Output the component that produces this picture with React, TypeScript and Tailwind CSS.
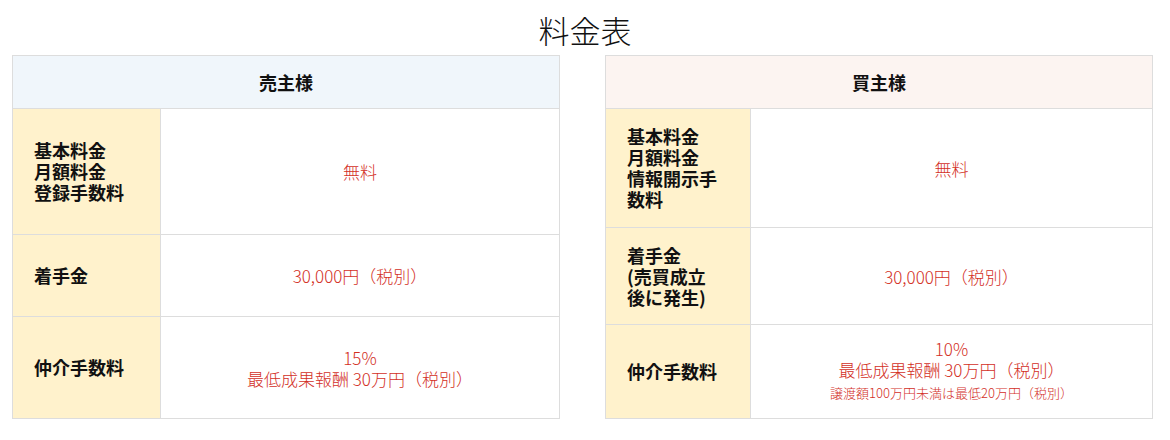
const font = { fontFamily: '"Noto Sans CJK JP", "Noto Sans", sans-serif' };

interface Row {
  label: React.ReactNode;
  value: React.ReactNode;
  height: string;
}

function FeeTable({
  title,
  headBg,
  labelWidth,
  rows,
}: {
  title: string;
  headBg: string;
  labelWidth: string;
  rows: Row[];
}) {
  return (
    <table className="w-[548px] border-collapse">
      <thead>
        <tr>
          <th
            colSpan={2}
            className={`h-[53px] border border-[#dddddd] ${headBg} text-[18px] font-bold text-[#111] text-center`}
          >
            {title}
          </th>
        </tr>
      </thead>
      <tbody>
        {rows.map((row, i) => (
          <tr key={i} className={row.height}>
            <td
              className={`${labelWidth} border border-[#dddddd] bg-[#fff2cc] pl-[21px] pr-[20px] text-left align-middle text-[18px] font-bold leading-[21px] text-[#111]`}
            >
              {row.label}
            </td>
            <td className="border border-[#dddddd] bg-white text-center align-middle text-[17px] font-light leading-[21px] text-[#d3301f]">
              {row.value}
            </td>
          </tr>
        ))}
      </tbody>
    </table>
  );
}

export default function App() {
  const sellerRows: Row[] = [
    {
      label: (
        <>
          基本料金
          <br />
          月額料金
          <br />
          登録手数料
        </>
      ),
      value: '無料',
      height: 'h-[126px]',
    },
    { label: '着手金', value: '30,000円（税別）', height: 'h-[82px]' },
    {
      label: '仲介手数料',
      value: (
        <>
          15%
          <br />
          最低成果報酬 30万円（税別）
        </>
      ),
      height: 'h-[102px]',
    },
  ];

  const buyerRows: Row[] = [
    {
      label: (
        <>
          基本料金
          <br />
          月額料金
          <br />
          情報開示手
          <br />
          数料
        </>
      ),
      value: '無料',
      height: 'h-[119px]',
    },
    {
      label: (
        <>
          着手金
          <br />
          (売買成立
          <br />
          後に発生)
        </>
      ),
      value: '30,000円（税別）',
      height: 'h-[97px]',
    },
    {
      label: '仲介手数料',
      value: (
        <>
          10%
          <br />
          最低成果報酬 30万円（税別）
          <br />
          <span className="text-[13px] leading-[24px]">
            譲渡額100万円未満は最低20万円（税別）
          </span>
        </>
      ),
      height: 'h-[94px]',
    },
  ];

  return (
    <div className="h-[440px] w-[1170px] bg-white" style={font}>
      <h1 className="h-[55px] pt-[8px] text-center text-[31px] font-light leading-[44px] text-[#111]">
        料金表
      </h1>
      <div className="flex gap-[45px] pl-[12px]">
        <FeeTable
          title="売主様"
          headBg="bg-[#f0f6fb]"
          labelWidth="w-[148px]"
          rows={sellerRows}
        />
        <FeeTable
          title="買主様"
          headBg="bg-[#fcf4f1]"
          labelWidth="w-[145px]"
          rows={buyerRows}
        />
      </div>
    </div>
  );
}
